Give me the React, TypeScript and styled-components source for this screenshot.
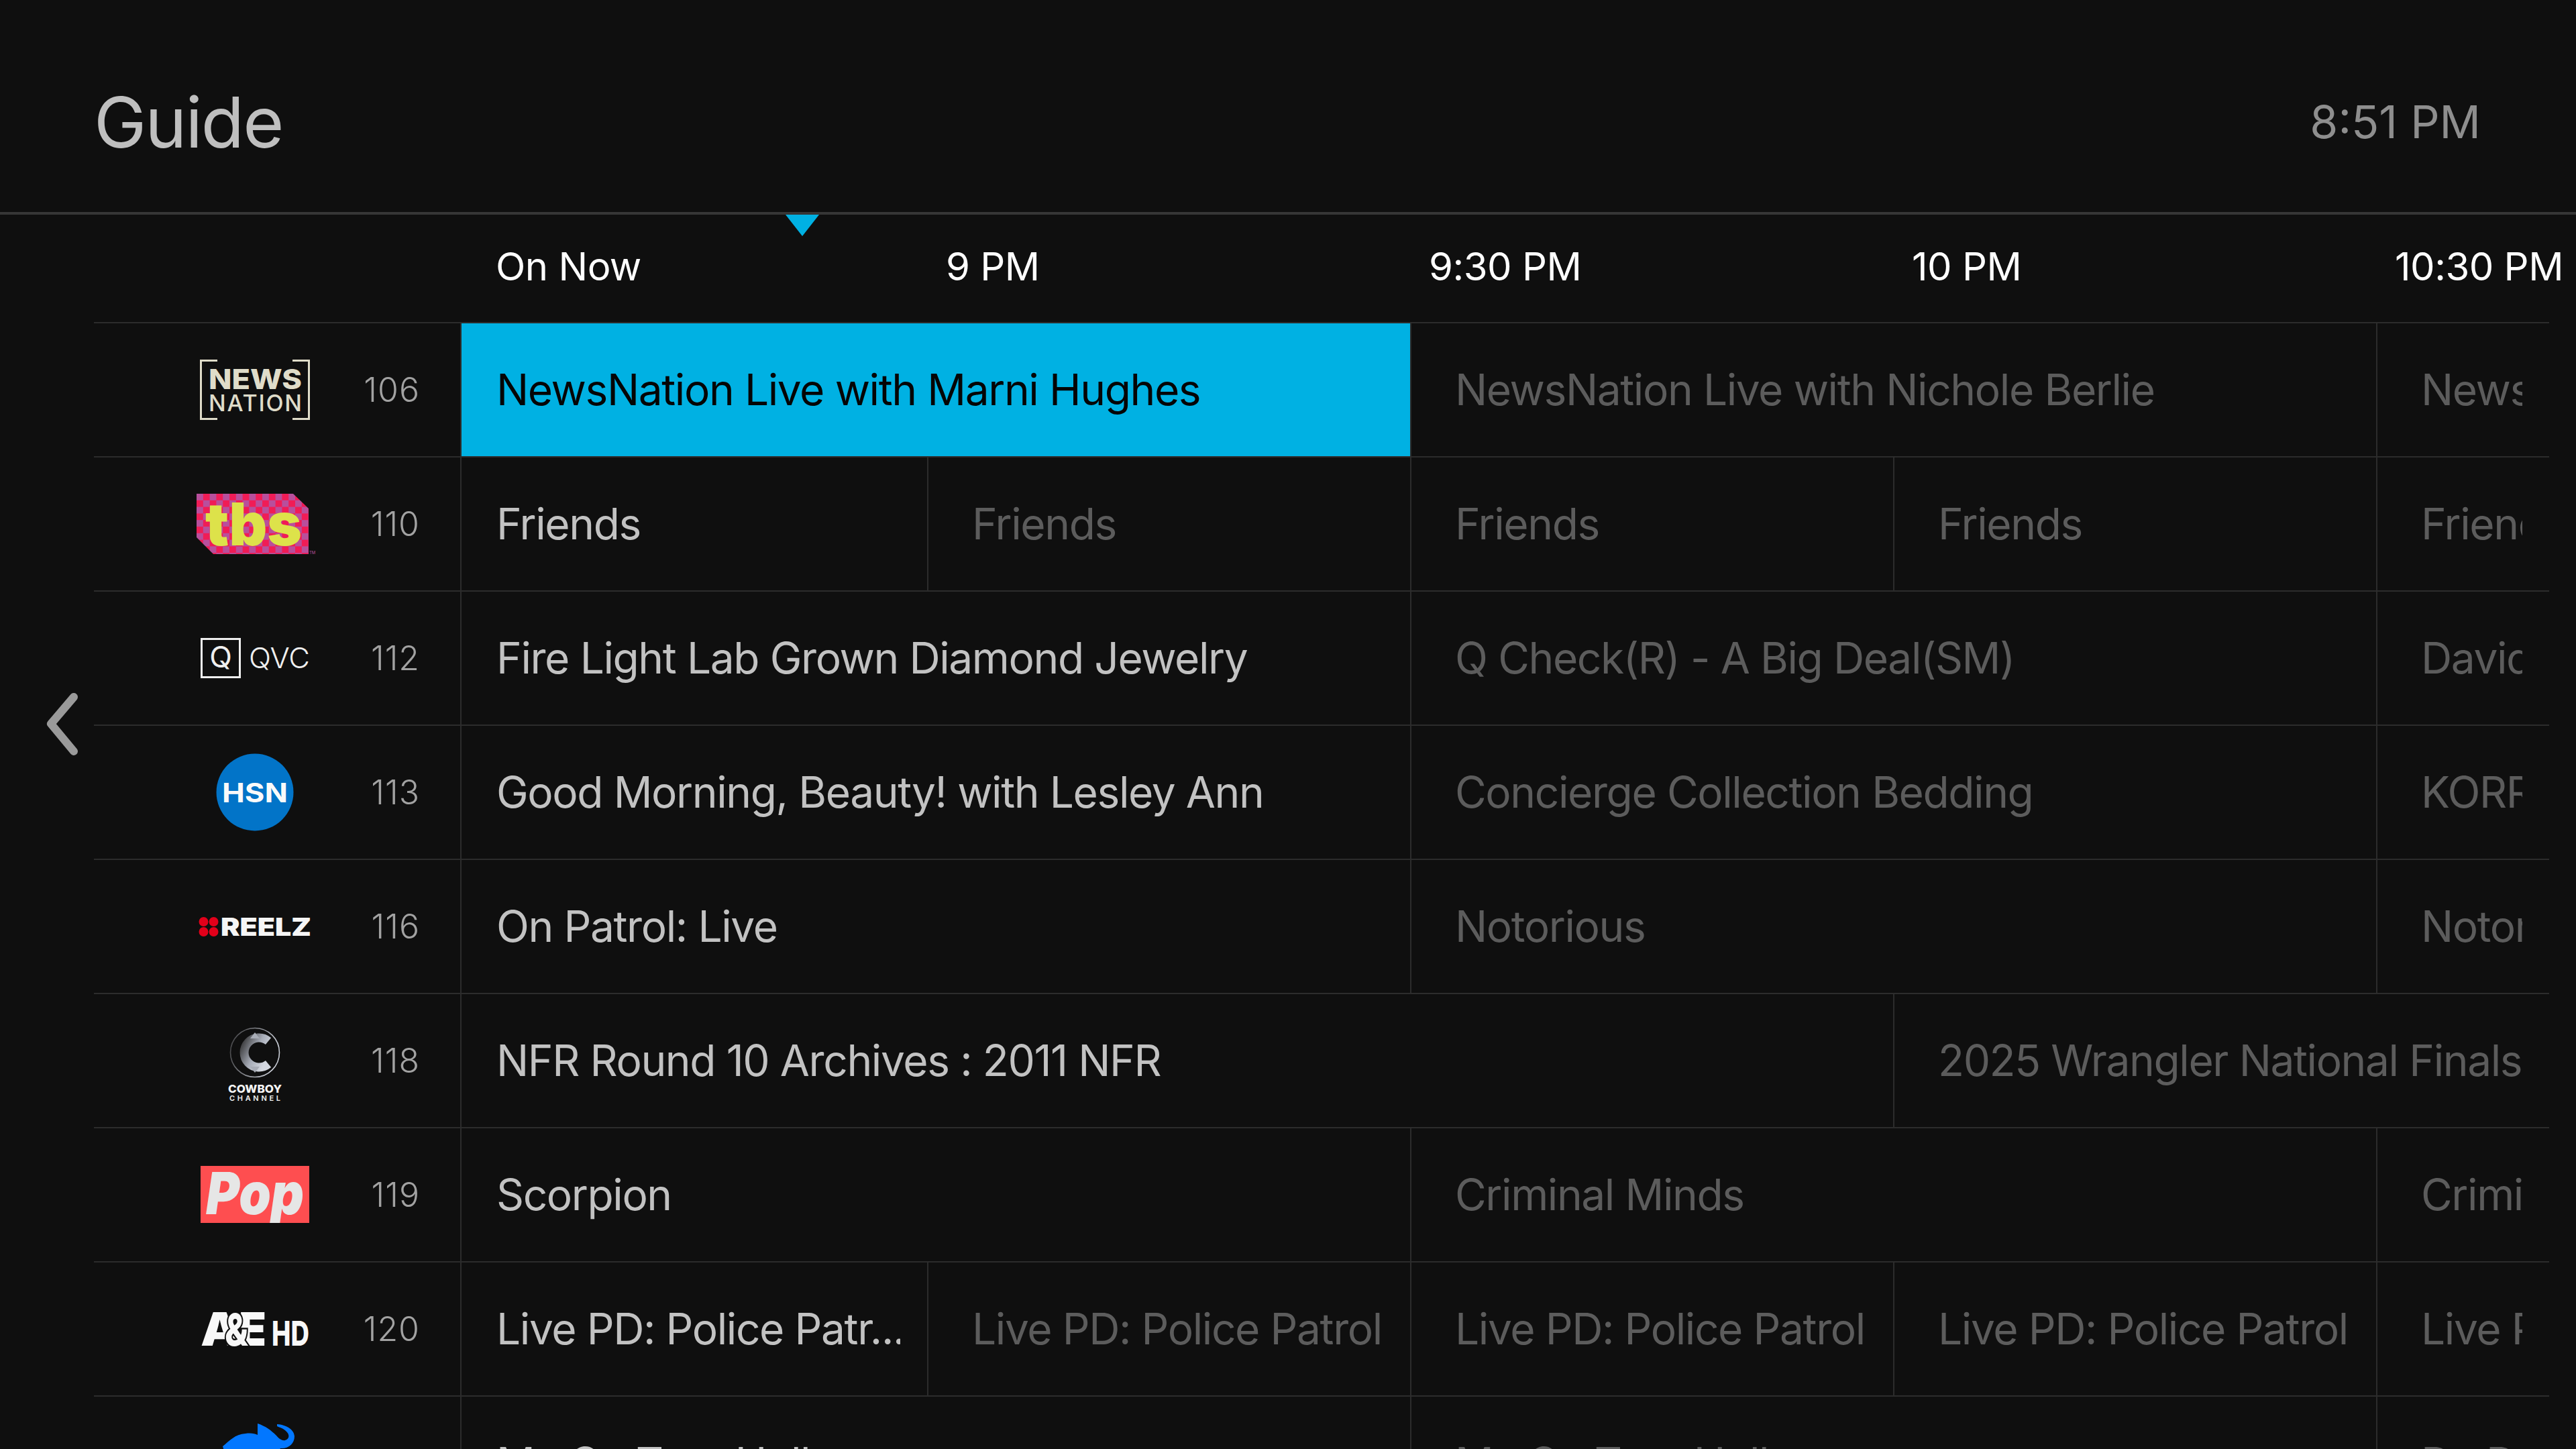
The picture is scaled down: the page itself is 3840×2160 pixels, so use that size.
import React from "react";
import styled, { createGlobalStyle } from "styled-components";

const Global = createGlobalStyle`
  html, body { margin: 0; padding: 0; background: #0f0f0f; }
  #root { width: 3840px; height: 2160px; overflow: hidden; }
`;

const Screen = styled.div`
  width: 3840px;
  height: 2160px;
  overflow: hidden;
  background: #0f0f0f;
  font-family: Inter, "Liberation Sans", sans-serif;
  display: flex;
  flex-direction: column;
`;

const Header = styled.header`
  box-sizing: border-box;
  height: 320px;
  flex: none;
  border-bottom: 4px solid #363636;
  padding: 46px 142px 0 140px;
  display: flex;
  align-items: center;
  justify-content: space-between;
`;

const Title = styled.h1`
  margin: 0;
  font-size: 105px;
  font-weight: 400;
  letter-spacing: -2px;
  color: #bfbfbf;
`;

const Clock = styled.div`
  font-size: 68px;
  font-weight: 400;
  color: #8e8e8e;
`;

const Body = styled.main`
  flex: 1;
  display: flex;
  min-height: 0;
`;

const Gutter = styled.nav`
  box-sizing: border-box;
  width: 140px;
  flex: none;
  padding: 712px 0 0 62px;
`;

const Guide = styled.div`
  flex: 1;
  min-width: 0;
  display: flex;
  flex-direction: column;
`;

const TimeRow = styled.div`
  position: relative;
  box-sizing: border-box;
  height: 160px;
  flex: none;
  display: flex;
  align-items: flex-start;
  padding: 41px 0 0 599px;
`;

const NowMarker = styled.svg`
  position: absolute;
  left: 1031px;
  top: 0;
  display: block;
`;

const TimeLabel = styled.span<{ $w: number }>`
  width: ${(p) => p.$w}px;
  flex: none;
  font-size: 58px;
  line-height: 72px;
  font-weight: 400;
  letter-spacing: -0.5px;
  color: #fff;
  white-space: nowrap;
`;

const Row = styled.div`
  box-sizing: border-box;
  width: 3660px;
  height: 200px;
  flex: none;
  border-top: 2px solid #2c2c2c;
  display: flex;
`;

const Channel = styled.div`
  box-sizing: border-box;
  width: 546px;
  flex: none;
  padding: 0 60px 0 150px;
  display: flex;
  align-items: center;
`;

const LogoBox = styled.svg`
  width: 180px;
  height: 198px;
  flex: none;
  display: block;
  overflow: visible;
  font-family: Inter, "Liberation Sans", sans-serif;
`;

const ChannelNumber = styled.span`
  flex: 1;
  text-align: right;
  font-size: 50px;
  font-weight: 300;
  letter-spacing: 1px;
  color: #a2a2a2;
  margin-top: -1px;
`;

type Tone = "focus" | "on" | "dim";

const Cell = styled.div<{ $w: number; $tone: Tone; $first: boolean }>`
  box-sizing: border-box;
  width: ${(p) => p.$w}px;
  flex: none;
  border-left: 2px solid #2c2c2c;
  padding: 0 40px 0 ${(p) => (p.$first ? 52 : 65)}px;
  display: flex;
  align-items: center;
  background: ${(p) => (p.$tone === "focus" ? "#00b1e3" : "transparent")};
  color: ${(p) => (p.$tone === "focus" ? "#050505" : p.$tone === "on" ? "#c2c2c2" : "#5c5c5c")};
`;

const Program = styled.span`
  display: block;
  overflow: hidden;
  white-space: nowrap;
  font-size: 64px;
  line-height: 80px;
  font-weight: 400;
  letter-spacing: -1.4px;
`;

const ChevronIcon = () => (
  <svg width="60" height="96" viewBox="0 0 60 96" fill="none" style={{ display: "block" }}>
    <path d="M48 7 L14 47 L48 88" stroke="#9a9a9a" strokeWidth="12" strokeLinecap="round" strokeLinejoin="round" />
  </svg>
);

const NewsLogo = () => (
  <LogoBox viewBox="0 0 180 198">
    <path d="M34 55.5H9.5V142.5H34M146 55.5H170.5V142.5H146" fill="none" stroke="#dfdcc9" strokeWidth="3" />
    <text x="21" y="98" fontSize="41" fontWeight="800" fill="#dfdcc9" textLength="139" lengthAdjust="spacingAndGlyphs">NEWS</text>
    <text x="21" y="131" fontSize="34" fontWeight="500" fill="#dfdcc9" textLength="139" lengthAdjust="spacing">NATION</text>
  </LogoBox>
);

const TbsLogo = () => (
  <LogoBox viewBox="0 0 180 198">
    <defs>
      <pattern id="tbsCheck" x="3" y="54" width="19.6" height="19.6" patternUnits="userSpaceOnUse">
        <rect width="19.6" height="19.6" fill="#f01c56" />
        <rect width="9.8" height="9.8" fill="#b84f9c" />
        <rect x="9.8" y="9.8" width="9.8" height="9.8" fill="#b84f9c" />
      </pattern>
    </defs>
    <polygon points="3,54 147,54 170,76 170,144 28,144 3,119" fill="url(#tbsCheck)" />
    <text x="16" y="131" fontSize="88" fontWeight="900" fill="#dde24a" textLength="144" lengthAdjust="spacingAndGlyphs">tbs</text>
    <text x="171" y="144" fontSize="6" fill="#b84f9c">TM</text>
  </LogoBox>
);

const QvcLogo = () => (
  <LogoBox viewBox="0 0 180 198">
    <rect x="10.5" y="70.5" width="57" height="57" fill="none" stroke="#efefef" strokeWidth="3" />
    <text x="39" y="113" fontSize="44" fontWeight="400" fill="#efefef" textAnchor="middle">Q</text>
    <text x="81" y="114" fontSize="42" fontWeight="300" fill="#efefef" textLength="91" lengthAdjust="spacingAndGlyphs">QVC</text>
  </LogoBox>
);

const HsnLogo = () => (
  <LogoBox viewBox="0 0 180 198">
    <circle cx="90" cy="99" r="57.5" fill="#0274c8" />
    <text x="41" y="114" fontSize="39" fontWeight="700" fill="#fafafa" textLength="98" lengthAdjust="spacingAndGlyphs">HSN</text>
  </LogoBox>
);

const ReelzLogo = () => (
  <LogoBox viewBox="0 0 180 198">
    <circle cx="13.5" cy="92" r="7" fill="#e2001a" />
    <circle cx="28.5" cy="92" r="7" fill="#e2001a" />
    <circle cx="13.5" cy="107" r="7" fill="#e2001a" />
    <circle cx="28.5" cy="107" r="7" fill="#e2001a" />
    <text x="39" y="113" fontSize="37" fontWeight="900" fill="#f5f5f5" textLength="135" lengthAdjust="spacingAndGlyphs">REELZ</text>
  </LogoBox>
);

const CowboyLogo = () => (
  <LogoBox viewBox="0 0 180 198">
    <defs>
      <linearGradient id="cbRing" x1="0" y1="0" x2="1" y2="0.3">
        <stop offset="0" stopColor="#3a3a3c" />
        <stop offset="1" stopColor="#c9cdd6" />
      </linearGradient>
      <linearGradient id="cbC" x1="0" y1="0" x2="1" y2="0.6">
        <stop offset="0" stopColor="#3c3c3e" />
        <stop offset="0.55" stopColor="#a6abb6" />
        <stop offset="1" stopColor="#d4d8e0" />
      </linearGradient>
    </defs>
    <circle cx="90" cy="87" r="36.5" fill="none" stroke="url(#cbRing)" strokeWidth="1.6" />
    <path d="M110 70 A 22 22 0 1 0 110 104" fill="none" stroke="url(#cbC)" strokeWidth="13" />
    <polygon points="90,57 97,66 83,66" fill="#a8acb6" />
    <polygon points="90,117 97,108 83,108" fill="#a8acb6" />
    <text x="50" y="147" fontSize="16.5" fontWeight="800" fill="#f5f5f5" textLength="80" lengthAdjust="spacingAndGlyphs">COWBOY</text>
    <text x="52" y="159" fontSize="11" fontWeight="600" fill="#f0f0f0" textLength="76" lengthAdjust="spacing">CHANNEL</text>
  </LogoBox>
);

const PopLogo = () => (
  <LogoBox viewBox="0 0 180 198">
    <defs>
      <clipPath id="popClip">
        <rect x="9" y="56" width="162" height="85" />
      </clipPath>
    </defs>
    <rect x="9" y="56" width="162" height="85" fill="#fe4e50" />
    <g clipPath="url(#popClip)">
      <text x="17" y="128" fontSize="86" fontWeight="900" fontStyle="italic" fill="#e6e6e6" textLength="146" lengthAdjust="spacingAndGlyphs">Pop</text>
    </g>
  </LogoBox>
);

const AeLogo = () => (
  <LogoBox viewBox="0 0 180 198">
    <text x="9" y="124" fontSize="69" fontWeight="900" fill="#f8f8f8" textLength="58" lengthAdjust="spacingAndGlyphs">A</text>
    <text x="66" y="124" fontSize="69" fontWeight="900" fill="#f8f8f8" textLength="41" lengthAdjust="spacingAndGlyphs">E</text>
    <text x="45" y="124" fontSize="66" fontWeight="800" fill="#f8f8f8" stroke="#0f0f0f" strokeWidth="5" paintOrder="stroke" textLength="35" lengthAdjust="spacingAndGlyphs">&amp;</text>
    <text x="115" y="124" fontSize="51" fontWeight="800" fill="#f8f8f8" textLength="56" lengthAdjust="spacingAndGlyphs">HD</text>
  </LogoBox>
);

const ElephantLogo = () => (
  <LogoBox viewBox="0 0 180 198">
    <path
      d="M42 74C52 66 60 56 76 55C84 54 90 55 94 57L94 40C106 44 114 50 122 58C126 63 131 66 135 65C142 63 142 56 136 51C132 47 127 46 123 44L123 41C136 42 148 48 149 59C149 70 140 78 128 77L120 90L50 100Z"
      fill="#0277ff"
    />
  </LogoBox>
);

type Show = { title: string; w: number; tone: Tone };
type Listing = { num: string; logo: React.ReactNode; shows: Show[] };

const FIRST = 696;
const HALF = 720;
const TAIL = 258;

const s = (title: string, w: number, tone: Tone = "dim"): Show => ({ title, w, tone });

const LISTINGS: Listing[] = [
  {
    num: "106",
    logo: <NewsLogo />,
    shows: [
      s("NewsNation Live with Marni Hughes", FIRST + HALF, "focus"),
      s("NewsNation Live with Nichole Berlie", HALF * 2),
      s("NewsNation Live", TAIL),
    ],
  },
  {
    num: "110",
    logo: <TbsLogo />,
    shows: [s("Friends", FIRST, "on"), s("Friends", HALF), s("Friends", HALF), s("Friends", HALF), s("Friends", TAIL)],
  },
  {
    num: "112",
    logo: <QvcLogo />,
    shows: [
      s("Fire Light Lab Grown Diamond Jewelry", FIRST + HALF, "on"),
      s("Q Check(R) - A Big Deal(SM)", HALF * 2),
      s("David's Closet", TAIL),
    ],
  },
  {
    num: "113",
    logo: <HsnLogo />,
    shows: [
      s("Good Morning, Beauty! with Lesley Ann", FIRST + HALF, "on"),
      s("Concierge Collection Bedding", HALF * 2),
      s("KORRES", TAIL),
    ],
  },
  {
    num: "116",
    logo: <ReelzLogo />,
    shows: [s("On Patrol: Live", FIRST + HALF, "on"), s("Notorious", HALF * 2), s("Notorious", TAIL)],
  },
  {
    num: "118",
    logo: <CowboyLogo />,
    shows: [
      s("NFR Round 10 Archives : 2011 NFR", FIRST + HALF * 2, "on"),
      s("2025 Wrangler National Finals Rodeo", HALF + TAIL),
    ],
  },
  {
    num: "119",
    logo: <PopLogo />,
    shows: [s("Scorpion", FIRST + HALF, "on"), s("Criminal Minds", HALF * 2), s("Criminal Minds", TAIL)],
  },
  {
    num: "120",
    logo: <AeLogo />,
    shows: [
      s("Live PD: Police Patr...", FIRST, "on"),
      s("Live PD: Police Patrol", HALF),
      s("Live PD: Police Patrol", HALF),
      s("Live PD: Police Patrol", HALF),
      s("Live PD: Police Patrol", TAIL),
    ],
  },
  {
    num: "121",
    logo: <ElephantLogo />,
    shows: [
      s("My Go True Holl", FIRST + HALF, "on"),
      s("My Go True Holl", HALF * 2),
      s("Dr. Dr", TAIL),
    ],
  },
];

const TIMES: { label: string; w: number }[] = [
  { label: "On Now", w: 671 },
  { label: "9 PM", w: 720 },
  { label: "9:30 PM", w: 720 },
  { label: "10 PM", w: 720 },
  { label: "10:30 PM", w: 300 },
];

export default function App() {
  return (
    <Screen>
      <Global />
      <Header>
        <Title>Guide</Title>
        <Clock>8:51 PM</Clock>
      </Header>
      <Body>
        <Gutter>
          <ChevronIcon />
        </Gutter>
        <Guide>
          <TimeRow>
            <NowMarker width="50" height="32" viewBox="0 0 50 32">
              <polygon points="0,0 50,0 25,32" fill="#00b1e3" />
            </NowMarker>
            {TIMES.map((t) => (
              <TimeLabel key={t.label} $w={t.w}>
                {t.label}
              </TimeLabel>
            ))}
          </TimeRow>
          {LISTINGS.map((l) => (
            <Row key={l.num}>
              <Channel>
                {l.logo}
                <ChannelNumber>{l.num}</ChannelNumber>
              </Channel>
              {l.shows.map((show, i) => (
                <Cell key={i} $w={show.w} $tone={show.tone} $first={i === 0}>
                  <Program>{show.title}</Program>
                </Cell>
              ))}
            </Row>
          ))}
        </Guide>
      </Body>
    </Screen>
  );
}
